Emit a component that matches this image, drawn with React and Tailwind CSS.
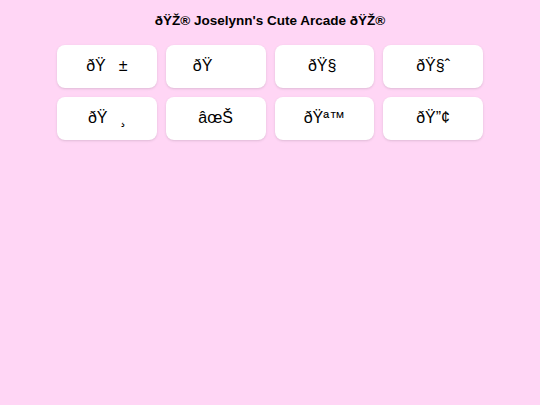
import React from 'react';

const games = [
  '\u00f0\u0178\u0090\u00b1',
  '\u00f0\u0178\u0090\u008d',
  '\u00f0\u0178\u00a7\u00a0',
  '\u00f0\u0178\u00a7\u02c6',
  '\u00f0\u0178\u0090\u00b8',
  '\u00e2\u0153\u0160',
  '\u00f0\u0178\u00aa\u2122',
  '\u00f0\u0178\u201d\u00a2',
];

const App = () => {
  return (
    <div className="min-h-screen bg-[#ffd6f5] font-['Liberation_Sans',Arial,sans-serif] text-black">
      <h1 className="pt-[12px] text-center text-[13.5px] font-bold leading-[17px]">
        {'\u00f0\u0178\u017d\u00ae Joselynn\'s Cute Arcade \u00f0\u0178\u017d\u00ae'}
      </h1>
      <div className="mx-auto mt-[16px] grid w-[426px] grid-cols-4 gap-[9px]">
        {games.map((g, i) => (
          <button
            key={i}
            className="flex h-[43px] items-center justify-center rounded-lg bg-white pb-[1px] text-[16px] shadow-sm"
          >
            {g}
          </button>
        ))}
      </div>
    </div>
  );
};

export default App;
